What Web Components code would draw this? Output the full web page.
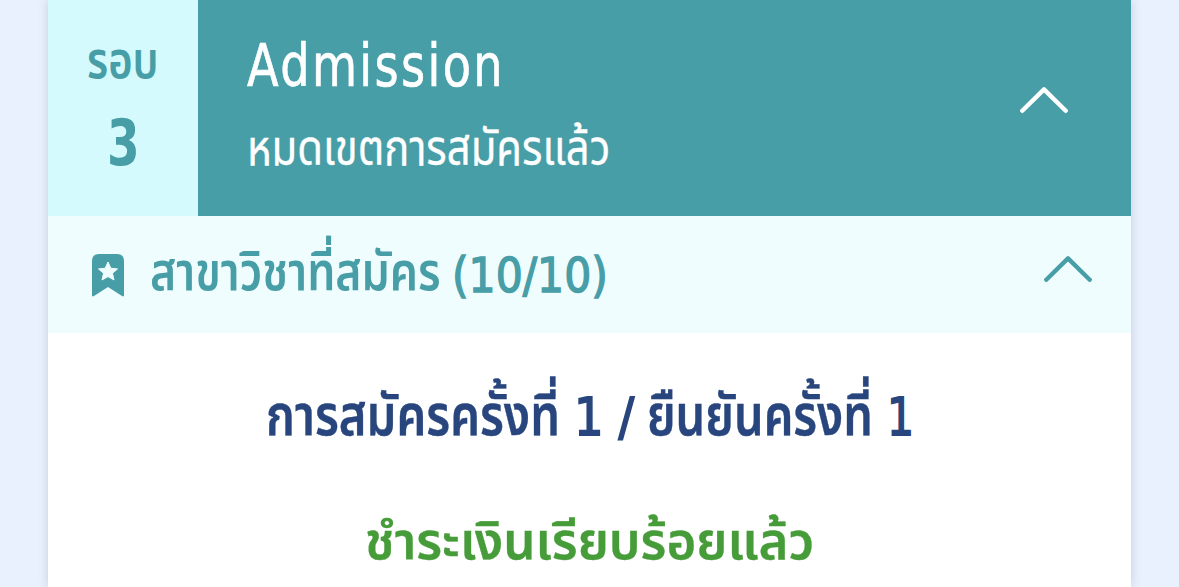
<!DOCTYPE html>
<html lang="th">
<head>
<meta charset="utf-8">
<title>Admission</title>
<style>
    body {
        margin: 0;
        height: 587px;
        overflow: hidden;
        background-color: #eaf1fe;
        font-family: "DejaVu Sans", "Noto Sans", "Noto Sans Thai", sans-serif;
    }

    .heading {
        display: flex;
        color: #28467d;
    }

    .payment {
        color: #469c38;
    }
</style>
</head>
<body>
<round-card>
    <round-header slot="header">
        <fit-text slot="label" width="72" size="51" line="54" weight="600">รอบ</fit-text>
        <fit-text slot="number" width="33" size="64" line="90" weight="700">3</fit-text>
        <fit-text slot="title" width="258" size="59" line="84" spacing="3" stroke="0.7">Admission</fit-text>
        <fit-text slot="status" width="363" size="50" line="70" stroke="0.3">หมดเขตการสมัครแล้ว</fit-text>
    </round-header>
    <section-bar slot="section">
        <fit-text width="291" size="53" line="72" weight="600">สาขาวิชาที่สมัคร</fit-text>
        <fit-text width="156" size="48" line="72" stroke="1.5" style="margin: 3px 0 0 11px">(10/10)</fit-text>
    </section-bar>
    <div class="heading">
        <fit-text width="294" size="57" line="80" weight="600" stroke="0.4">การสมัครครั้งที่</fit-text>
        <fit-text width="60" size="52" line="80" stroke="1.8" style="margin: 2px 13px 0 14px">1 /</fit-text>
        <fit-text width="226" size="57" line="80" weight="600" stroke="0.4">ยืนยันครั้งที่</fit-text>
        <fit-text width="27" size="52" line="80" stroke="1.8" style="margin: 2px 0 0 14px">1</fit-text>
    </div>
    <fit-text class="payment" width="449" size="51" line="80" weight="600" stroke="0.3">ชำระเงินเรียบร้อยแล้ว</fit-text>
</round-card>

<script>
// One line of text, condensed or stretched to the given width
class FitText extends HTMLElement{

    constructor(){
        super();
        this.shadowDOM = this.attachShadow({mode: "open"});
    }

    connectedCallback(){
        this.render();
        this.fit();
    }

    fit(){
        const line = this.shadowDOM.querySelector("span");
        const scale = this.getAttribute("width") / line.offsetWidth;
        line.style.transform = `scaleX(${scale})`;
    }

    render(){
        this.shadowDOM.innerHTML = `
        <style>
            :host {
                display: block;
                flex: none;
                width: ${this.getAttribute("width")}px;
                height: ${this.getAttribute("line")}px;
                line-height: ${this.getAttribute("line")}px;
                font-size: ${this.getAttribute("size")}px;
                font-weight: ${this.getAttribute("weight") || 400};
                letter-spacing: ${this.getAttribute("spacing") || 0}px;
                -webkit-text-stroke: ${this.getAttribute("stroke") || 0}px currentColor;
            }

            span {
                display: inline-block;
                white-space: nowrap;
                transform-origin: left center;
            }
        </style>
        <span><slot></slot></span>`;
    }
}

class ChevronUp extends HTMLElement{

    constructor(){
        super();
        this.shadowDOM = this.attachShadow({mode: "open"});
    }

    connectedCallback(){
        this.render();
    }

    render(){
        this.shadowDOM.innerHTML = `
        <style>
            :host {
                display: block;
                width: 48px;
                height: 27px;
            }

            svg {
                display: block;
            }
        </style>
        <svg width="48" height="27" viewBox="0 0 48 27" fill="none" stroke="currentColor" stroke-width="4.4" stroke-linecap="round" stroke-linejoin="round">
            <path d="M2.3 23.8L24 2.4L45.7 23.8"/>
        </svg>`;
    }
}

class RoundHeader extends HTMLElement{

    constructor(){
        super();
        this.shadowDOM = this.attachShadow({mode: "open"});
    }

    connectedCallback(){
        this.render();
    }

    render(){
        this.shadowDOM.innerHTML = `
        <style>
            :host {
                display: flex;
                height: 216px;
                color: white;
                background-color: #489ea7;
            }

            .round {
                display: flex;
                flex-direction: column;
                align-items: center;
                gap: 10px;
                box-sizing: border-box;
                width: 150px;
                padding-top: 34px;
                color: #489ea7;
                background-color: #d5fafd;
            }

            .info {
                flex: 1;
                padding: 24px 0 0 49px;
            }

            ::slotted([slot="status"]) {
                margin-top: 5px;
            }

            chevron-up {
                margin: 87px 63px 0 0;
            }
        </style>
        <div class="round">
            <slot name="label"></slot>
            <slot name="number"></slot>
        </div>
        <div class="info">
            <slot name="title"></slot>
            <slot name="status"></slot>
        </div>
        <chevron-up></chevron-up>`;
    }
}

class SectionBar extends HTMLElement{

    constructor(){
        super();
        this.shadowDOM = this.attachShadow({mode: "open"});
    }

    connectedCallback(){
        this.render();
    }

    render(){
        this.shadowDOM.innerHTML = `
        <style>
            :host {
                display: flex;
                align-items: flex-start;
                box-sizing: border-box;
                height: 117px;
                padding: 20px 39px 0 44px;
                color: #489ea7;
                background-color: #f0fdff;
            }

            .bookmark {
                flex: none;
                margin: 18px 26px 0 0;
            }

            chevron-up {
                margin: 20px 0 0 auto;
            }
        </style>
        <svg class="bookmark" width="32" height="43" viewBox="0 0 32 43">
            <path fill="currentColor" d="M7 0H25Q32 0 32 7V41Q32 43.2 30 42L16 33L2 42Q0 43.2 0 41V7Q0 0 7 0Z"/>
            <path fill="#f0fdff" stroke="#f0fdff" stroke-linejoin="round" d="M16 8L18.8 14.2L25.5 14.9L20.5 19.3L22 26L16 22.6L10 26L11.5 19.3L6.5 14.9L13.2 14.2Z"/>
        </svg>
        <slot></slot>
        <chevron-up></chevron-up>`;
    }
}

class RoundCard extends HTMLElement{

    constructor(){
        super();
        this.shadowDOM = this.attachShadow({mode: "open"});
    }

    connectedCallback(){
        this.render();
    }

    render(){
        this.shadowDOM.innerHTML = `
        <style>
            :host {
                display: block;
                width: 1083px;
                height: 587px;
                margin-left: 48px;
                background-color: white;
                box-shadow: 0 0 10px rgba(70, 90, 120, 0.24);
            }

            .body {
                display: flex;
                flex-direction: column;
                align-items: center;
                gap: 45px;
                padding-top: 42px;
            }
        </style>
        <slot name="header"></slot>
        <slot name="section"></slot>
        <div class="body">
            <slot></slot>
        </div>`;
    }
}

customElements.define("fit-text", FitText);
customElements.define("chevron-up", ChevronUp);
customElements.define("round-header", RoundHeader);
customElements.define("section-bar", SectionBar);
customElements.define("round-card", RoundCard);
</script>
</body>
</html>
